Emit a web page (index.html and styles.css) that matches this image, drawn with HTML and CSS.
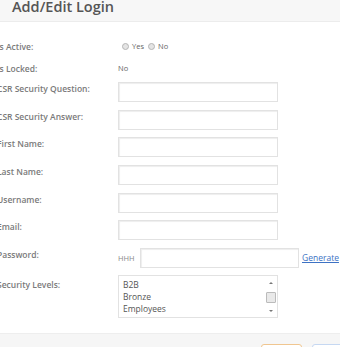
FILE: index.html
```html
<!DOCTYPE html>
<html lang="en">
<head>
    <meta charset="UTF-8">
    <meta name="viewport" content="width=device-width, initial-scale=1.0">
    <title>Add/Edit Login</title>
    <link rel="stylesheet" href="styles.css">
</head>
<body>
    <div class="modal">
        <div class="modal-header">
            <h2>Add/Edit Login</h2>
        </div>

        <!-- Login form -->
        <div class="modal-body">
            <div class="form-row">
                <label>Is Active:</label>
                <div class="field">
                    <span class="radio"></span><span class="value">Yes</span>
                    <span class="radio"></span><span class="value">No</span>
                </div>
            </div>
            <div class="form-row short">
                <label>Is Locked:</label>
                <div class="field"><span class="value">No</span></div>
            </div>
            <div class="form-row top">
                <label>CSR Security Question:</label>
                <div class="field"><input type="text" class="text-input"></div>
            </div>
            <div class="form-row top">
                <label>CSR Security Answer:</label>
                <div class="field"><input type="text" class="text-input"></div>
            </div>
            <div class="form-row top">
                <label>First Name:</label>
                <div class="field"><input type="text" class="text-input"></div>
            </div>
            <div class="form-row top">
                <label>Last Name:</label>
                <div class="field"><input type="text" class="text-input"></div>
            </div>
            <div class="form-row top">
                <label>Username:</label>
                <div class="field"><input type="text" class="text-input"></div>
            </div>
            <div class="form-row top">
                <label>Email:</label>
                <div class="field"><input type="text" class="text-input"></div>
            </div>
            <div class="form-row top">
                <label>Password:</label>
                <div class="field">
                    <span class="value hint">HHH</span>
                    <input type="text" class="text-input pw-input">
                    <a href="#" class="generate">Generate</a>
                </div>
            </div>
            <div class="form-row top">
                <label class="list-label">Security Levels:</label>
                <div class="field">
                    <div class="listbox">
                        <div class="options">
                            <div>B2B</div>
                            <div>Bronze</div>
                            <div>Employees</div>
                        </div>
                        <div class="scrollbar">
                            <span class="arrow up"></span>
                            <span class="thumb"></span>
                            <span class="arrow down"></span>
                        </div>
                    </div>
                </div>
            </div>
        </div>

        <div class="modal-footer">
            <button class="btn btn-cancel"></button>
            <button class="btn btn-save"></button>
        </div>
    </div>
</body>
</html>
```

FILE: styles.css
```css
body {
    margin: 0;
    font-family: "Open Sans", Arial, sans-serif;
    background-color: #fff;
    overflow: hidden;
}

.modal {
    margin-top: -8px;
    margin-left: -15px;
    width: 380px;
}

.modal-header {
    background-color: #f7f7f7;
    border-bottom: 1px solid #ececec;
    height: 29px;
    padding-left: 27px;
}

.modal-header h2 {
    margin: 0;
    font-size: 14.5px;
    font-weight: 600;
    line-height: 30px;
    color: #555;
}

.modal-body {
    padding: 16px 0 15px 12px;
    display: flex;
    flex-direction: column;
    gap: 7.6px;
}

.form-row {
    display: grid;
    grid-template-columns: 121px 1fr;
    align-items: center;
    min-height: 16px;
}

.form-row.short {
    min-height: 13px;
}

.form-row.top {
    align-items: start;
}

.form-row label {
    font-size: 8.5px;
    font-weight: 600;
    color: #7a7a7a;
}

.form-row.top label {
    padding-top: 1px;
}

.form-row.top .list-label {
    padding-top: 4px;
}

.field {
    display: flex;
    align-items: center;
}

.value {
    font-size: 7.5px;
    color: #666;
}

.radio {
    width: 5px;
    height: 5px;
    border: 1px solid #b5b5b5;
    border-radius: 50%;
    background-color: #e4e4e4;
    margin: 0 3px 0 4px;
}

.text-input {
    box-sizing: border-box;
    width: 160px;
    height: 20px;
    margin: 0;
    border: 1px solid #e2e2e2;
    box-shadow: inset 1px 1px 1px #eee;
    padding: 0 4px;
}

.hint {
    width: 22px;
    color: #888;
}

.pw-input {
    width: 159px;
}

.generate {
    margin-left: 3px;
    font-size: 8.5px;
    color: #3d72c4;
}

.listbox {
    box-sizing: border-box;
    width: 160px;
    height: 43px;
    border: 1px solid #e2e2e2;
    display: flex;
    justify-content: space-between;
    padding: 3px 1px 2px 4px;
}

.options {
    font-size: 8.5px;
    line-height: 12px;
    color: #555;
}

.scrollbar {
    width: 11px;
    display: flex;
    flex-direction: column;
    align-items: center;
    justify-content: space-between;
}

.arrow {
    width: 0;
    height: 0;
    border-left: 2px solid transparent;
    border-right: 2px solid transparent;
    margin-top: 3px;
}

.arrow.up {
    border-bottom: 2px solid #777;
}

.arrow.down {
    border-top: 2px solid #777;
    margin: 0 0 3px;
}

.thumb {
    box-sizing: border-box;
    width: 10px;
    height: 11px;
    border: 1px solid #bbb;
    background-color: #e9e9e9;
    border-radius: 1px;
}

.modal-footer {
    background-color: #f6f6f6;
    border-top: 1px solid #eee;
    height: 40px;
    display: flex;
    padding: 10px 0 0 276px;
    gap: 10px;
}

.btn {
    width: 41px;
    height: 24px;
    background-color: #fff;
    border-radius: 3px;
    padding: 0;
}

.btn-cancel {
    border: 1px solid #f0c690;
}

.btn-save {
    border: 1px solid #c6d8f2;
}
```
